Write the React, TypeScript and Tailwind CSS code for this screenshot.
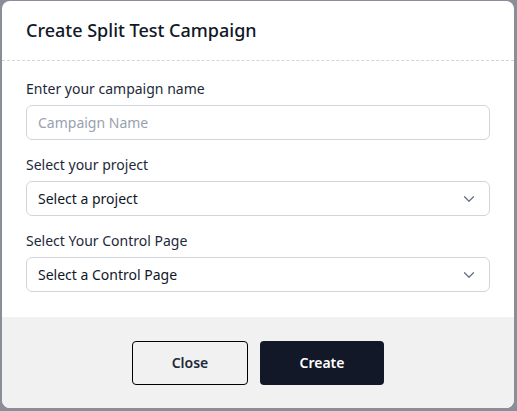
import { ChevronDown } from 'lucide-react';

const font = { fontFamily: '"Noto Sans", "Open Sans", sans-serif' };

const SelectBox = ({ text }: { text: string }) => (
  <div className="flex h-[35px] items-center justify-between rounded-md border border-gray-300 bg-white pl-[11px] pr-[11px] text-sm text-gray-900">
    <span>{text}</span>
    <ChevronDown className="h-[18px] w-[18px] text-gray-500" strokeWidth={1.75} />
  </div>
);

export default function App() {
  return (
    <div className="h-[411px] w-[517px] bg-[#8a8e98] pl-[2px] pt-[1px]" style={font}>
      <div className="flex h-[407px] w-[512px] flex-col overflow-hidden rounded-lg bg-white">
        <div className="flex h-[60px] items-center border-b border-dashed border-gray-300 px-6 pb-[1px]">
          <h2 className="text-lg font-medium text-gray-900">Create Split Test Campaign</h2>
        </div>

        <div className="flex flex-col px-6 pb-[25px] pt-[18px]">
          <label className="mb-1.5 text-sm text-gray-800">Enter your campaign name</label>
          <input
            placeholder="Campaign Name"
            className="h-[35px] rounded-md border border-gray-300 px-[11px] text-sm text-gray-900 placeholder:text-gray-400 outline-none"
          />

          <label className="mb-1.5 mt-[15px] text-sm text-gray-800">Select your project</label>
          <SelectBox text="Select a project" />

          <label className="mb-1.5 mt-[15px] text-sm text-gray-800">Select Your Control Page</label>
          <SelectBox text="Select a Control Page" />
        </div>

        <div className="flex flex-1 items-start justify-center gap-3 bg-[#f1f1f1] pt-6">
          <button className="h-11 w-[116px] rounded border border-black bg-transparent text-sm font-semibold text-gray-800">
            Close
          </button>
          <button className="h-11 w-[124px] rounded bg-[#121827] text-sm font-semibold text-white">
            Create
          </button>
        </div>
      </div>
    </div>
  );
}
